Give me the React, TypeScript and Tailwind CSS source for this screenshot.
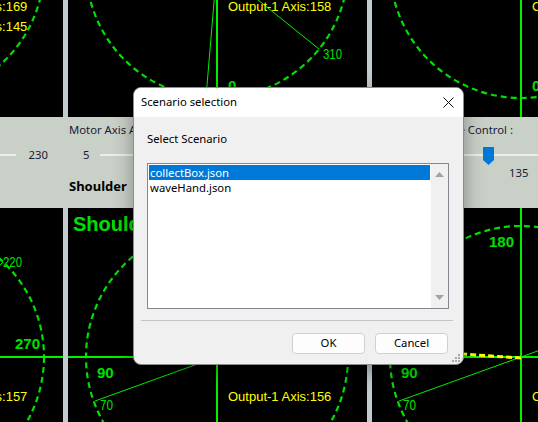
const G = '#00e000'
const LINE = '#00f000'

type Needle = { ex: number; ey: number; label?: string; lx?: number; ly?: number; lw?: number }

function Gauge({
    cy,
    height,
    texts,
    textY,
    needles,
    title,
    yellowNeedle,
}: {
    cy: number
    height: number
    texts: string[]
    textY: number
    needles: Needle[]
    title?: string
    yellowNeedle?: boolean
}) {
    const cx = 149
    const r = 131
    return (
        <div className="w-[299px] shrink-0 bg-black">
            <svg width={299} height={height} className="block font-['Liberation_Sans',Arial,sans-serif]">
                <circle cx={cx} cy={cy} r={r} fill="none" stroke={G} strokeWidth={2.2} strokeDasharray="6 4" />
                <line x1={cx} y1={0} x2={cx} y2={height} stroke={LINE} strokeWidth={2} />
                <line x1={0} y1={cy} x2={299} y2={cy} stroke={LINE} strokeWidth={2} />
                {needles.map((n, i) => (
                    <g key={i}>
                        <line x1={n.ex} y1={n.ey} x2={2 * cx - n.ex} y2={2 * cy - n.ey} stroke={LINE} strokeWidth={1} />
                        {n.label && (
                            <text
                                x={n.lx}
                                y={n.ly}
                                fill={G}
                                fontSize={14}
                                textLength={n.lw}
                                lengthAdjust="spacingAndGlyphs"
                            >
                                {n.label}
                            </text>
                        )}
                    </g>
                ))}
                {yellowNeedle && (
                    <line x1={cx} y1={cy + 1} x2={60} y2={cy - 5} stroke="#ffff00" strokeWidth={3} strokeDasharray="6 3" />
                )}
                <g fill={G} fontSize={15} fontWeight="bold">
                    <text x={cx - 32} y={cy - 110}>180</text>
                    <text x={cx + 102} y={cy - 8}>270</text>
                    <text x={cx - 120} y={cy + 21}>90</text>
                    <text x={cx + 11} y={cy + 124}>0</text>
                </g>
                {title && (
                    <text x={5} y={23} fill={G} fontSize={20} fontWeight="bold">
                        {title}
                    </text>
                )}
                {texts.map((t, i) => (
                    <text key={t} x={160} y={textY + i * 20} fill="#ffff00" fontSize={13}>
                        {t}
                    </text>
                ))}
            </svg>
        </div>
    )
}

function Thumb() {
    return (
        <svg width={11} height={18} className="absolute left-[111px] top-[1px]">
            <polygon points="0,0 11,0 11,13 5.5,18 0,13" fill="#0078d7" />
        </svg>
    )
}

function Band() {
    return (
        <div className="-ml-[236px] flex h-[91px] shrink-0 gap-[5px] bg-[#c9d0c8] text-[11.3px] text-[#1b1b33]">
            <div className="w-[299px] shrink-0 pt-[30px]">
                <div className="flex h-[16px] items-center">
                    <div className="h-[2px] flex-1 bg-[#eceeec]" />
                    <span className="ml-[13px] mr-[15px]">230</span>
                </div>
            </div>
            <div className="flex w-[299px] shrink-0 flex-col pl-[1px] pt-[5px]">
                <span className="h-[16px] whitespace-nowrap leading-[16px]">Motor Axis Angle Control :</span>
                <div className="mt-[9px] flex h-[16px] items-center">
                    <span className="ml-[14px]">5</span>
                    <div className="ml-[11px] h-[2px] flex-1 bg-[#eceeec]" />
                </div>
                <span className="mt-[14px] text-[13px] font-bold leading-[18px] text-black">Shoulder</span>
            </div>
            <div className="flex w-[299px] shrink-0 flex-col pt-[5px]">
                <div className="h-[16px] w-[141px] whitespace-nowrap text-right leading-[16px]">Wrist Angle Control :</div>
                <div className="relative mt-[8px] h-[19px]">
                    <div className="mt-[8px] h-[2px] w-full bg-[#eceeec]" />
                    <Thumb />
                </div>
                <span className="ml-[137px] leading-[16px]">135</span>
            </div>
        </div>
    )
}

function Dialog() {
    return (
        <div className="absolute left-[133px] top-[87px] flex h-[278px] w-[331px] flex-col overflow-hidden rounded-[8px] border border-[#8c8c8c] bg-[#f0f0f0] text-[11.3px] text-black shadow-[0_6px_20px_rgba(0,0,0,0.35)]">
            <div className="flex h-[29px] shrink-0 items-center justify-between bg-white pl-[7px] pr-[9px]">
                <span>Scenario selection</span>
                <svg width={11} height={11}>
                    <path d="M0.5 0.5 L10.5 10.5 M10.5 0.5 L0.5 10.5" stroke="#111" strokeWidth={1} />
                </svg>
            </div>
            <div className="flex flex-1 flex-col px-[13px] pt-[14px]">
                <span className="h-[16px] leading-[16px]">Select Scenario</span>
                <div className="mt-[16px] flex h-[146px] w-[302px] border border-[#828790] bg-white">
                    <div className="flex flex-1 flex-col p-[1px]">
                        <div className="h-[15px] bg-[#0078d7] pl-[1px] leading-[15px] text-white">collectBox.json</div>
                        <div className="h-[15px] pl-[1px] leading-[15px]">waveHand.json</div>
                    </div>
                    <div className="flex w-[17px] flex-col items-center justify-between bg-[#f0f0f0] py-[8px]">
                        <svg width={9} height={5}>
                            <polygon points="0,5 4.5,0 9,5" fill="#a3a3a3" />
                        </svg>
                        <svg width={9} height={5}>
                            <polygon points="0,0 9,0 4.5,5" fill="#a3a3a3" />
                        </svg>
                    </div>
                </div>
                <div className="-ml-[6px] mt-[11px] h-px w-[312px] bg-[#c4c4c4]" />
                <div className="mt-[12px] flex justify-end gap-[10px] pr-[2px]">
                    <button className="h-[21px] w-[73px] rounded-[4px] border border-[#d0d0d0] bg-[#fdfdfd]">OK</button>
                    <button className="h-[21px] w-[73px] rounded-[4px] border border-[#d0d0d0] bg-[#fdfdfd]">Cancel</button>
                </div>
            </div>
            <svg width={8} height={8} className="absolute bottom-[2px] right-[3px]">
                <g fill="#a8a8a8">
                    <rect x={6} y={0} width={2} height={2} />
                    <rect x={3} y={3} width={2} height={2} />
                    <rect x={6} y={3} width={2} height={2} />
                    <rect x={0} y={6} width={2} height={2} />
                    <rect x={3} y={6} width={2} height={2} />
                    <rect x={6} y={6} width={2} height={2} />
                </g>
            </svg>
        </div>
    )
}

export default function App() {
    const seventy: Needle = { ex: 27, ey: 193, label: '70', lx: 32, ly: 202, lw: 13 }
    return (
        <div className="relative h-[422px] w-[538px] overflow-hidden bg-[#c3cbcf] font-['Segoe_UI','Noto_Sans',sans-serif]">
            <div className="flex flex-col">
                <div className="-ml-[236px] flex h-[117px] shrink-0 gap-[5px]">
                    <Gauge cy={-33} height={117} textY={11} texts={['Output-1 Axis:169', 'Output-2 Axis:145']} needles={[]} />
                    <Gauge
                        cy={-33}
                        height={117}
                        textY={11}
                        texts={['Output-1 Axis:158']}
                        needles={[
                            { ex: 251, ey: 49, label: '310', lx: 255, ly: 59, lw: 19 },
                            { ex: 138, ey: 97 },
                        ]}
                    />
                    <Gauge cy={-33} height={117} textY={11} texts={['Output-1 Axis:162']} needles={[]} />
                </div>
                <Band />
                <div className="-ml-[236px] flex h-[214px] shrink-0 gap-[5px]">
                    <Gauge
                        cy={149}
                        height={214}
                        textY={193}
                        title="Base"
                        texts={['Output-1 Axis:157']}
                        needles={[{ ex: 239, ey: 54, label: '220', lx: 239, ly: 59, lw: 19 }]}
                    />
                    <Gauge cy={149} height={214} textY={193} title="Shoulder" texts={['Output-1 Axis:156']} needles={[seventy]} />
                    <Gauge
                        cy={149}
                        height={214}
                        textY={193}
                        title="Elbow"
                        texts={['Output-1 Axis:135']}
                        needles={[{ ...seventy, lx: 31 }]}
                        yellowNeedle
                    />
                </div>
            </div>
            <Dialog />
        </div>
    )
}
